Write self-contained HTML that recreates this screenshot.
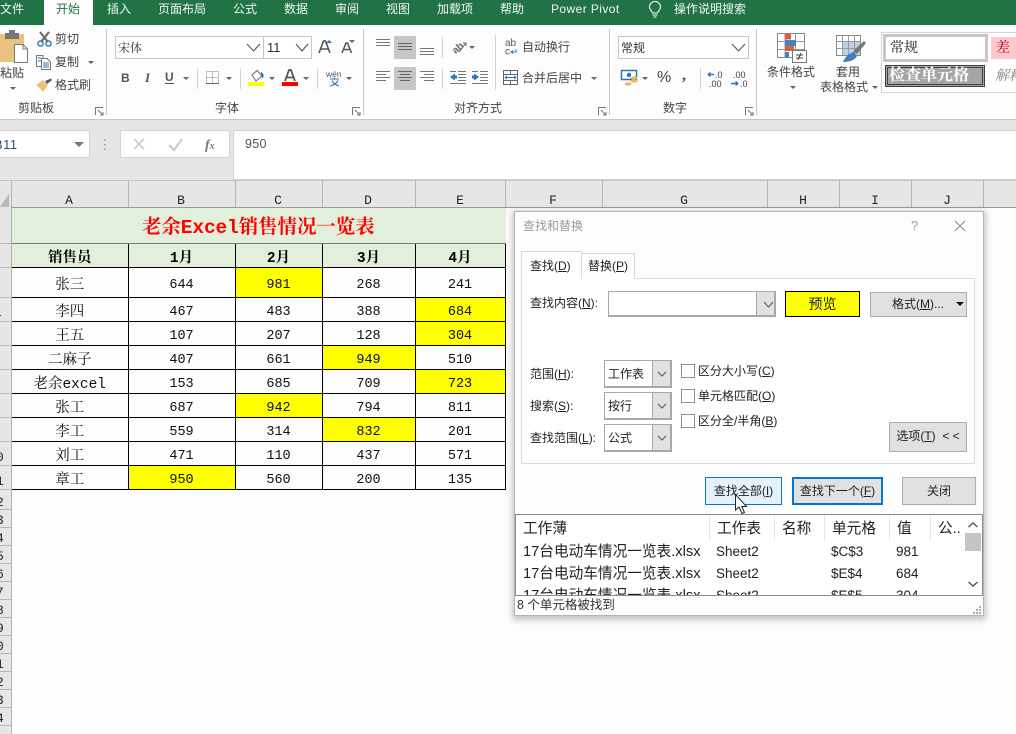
<!DOCTYPE html>
<html lang="zh"><head><meta charset="utf-8"><title>Excel</title>
<style>
html,body{margin:0;padding:0;width:1016px;height:734px;overflow:hidden;background:#fdfdfd}
#p{position:relative;width:1016px;height:734px;overflow:hidden;font-family:"Liberation Sans","Noto Sans CJK SC",sans-serif;font-size:12px;color:#444}
.a{position:absolute;box-sizing:border-box}
.t{position:absolute;white-space:nowrap;line-height:16px}
.w{color:#f2f7f4}
.h{position:absolute;top:193px;line-height:16px;font-family:"Liberation Mono","Noto Serif CJK SC",monospace;font-size:13px;color:#222;transform:translateX(-50%)}
.v{position:absolute;top:180px;width:1px;height:27px;background:#b5b5b5}
.rl{position:absolute;left:0;width:12px;height:1px;background:#b5b5b5}
.rn{position:absolute;left:-4px;margin-top:1px;font-family:"Liberation Mono",monospace;font-size:13px;line-height:16px;color:#222}
table{position:absolute;left:12px;top:208px;border-collapse:collapse;table-layout:fixed;width:493px;font-family:"Liberation Mono","Noto Serif CJK SC",monospace;font-size:13.5px;color:#111}
td{border:1px solid #000;padding:7px 0 0;text-align:center;line-height:14px;overflow:hidden;white-space:nowrap;box-sizing:border-box}
td:first-child{font-size:14.5px;padding-top:8px;border-left:0}
tr.n td{height:24px}
.y{background:#ff0}
.g{background:#e2efda;font-weight:bold;color:#000;font-size:14.5px}
.d{color:#222}
.btn{position:absolute;box-sizing:border-box;background:#e1e1e1;border:1px solid #adadad;text-align:center;color:#222;white-space:nowrap}
.cb{position:absolute;box-sizing:border-box;background:#fff;border:1px solid #8f8f8f;width:14px;height:14px}
.cmb{position:absolute;box-sizing:border-box;background:#fff;border:1px solid #a8a8a8;border-width:1px 2px 2px 1px;color:#222}
.ar{position:absolute;top:0;bottom:0;right:0;width:17px;background:#e1e1e1;border-left:1px solid #a8a8a8}
.lst{position:absolute;font-size:14.67px;color:#222;white-space:nowrap;line-height:18px}
.s{font-size:13.5px}
u{text-decoration:underline}
</style></head><body><div id="p">

<!-- title tabs -->
<div class="a" style="left:0;top:0;width:1016px;height:25px;background:#217346"></div>
<div class="a" style="left:44px;top:0;width:49px;height:26px;background:#fdfdfd"></div>
<div class="t w" style="left:0;top:1px">文件</div>
<div class="t" style="left:56px;top:1px;color:#217346">开始</div>
<div class="t w" style="left:107px;top:1px">插入</div>
<div class="t w" style="left:158px;top:1px">页面布局</div>
<div class="t w" style="left:233px;top:1px">公式</div>
<div class="t w" style="left:284px;top:1px">数据</div>
<div class="t w" style="left:335px;top:1px">审阅</div>
<div class="t w" style="left:386px;top:1px">视图</div>
<div class="t w" style="left:437px;top:1px">加载项</div>
<div class="t w" style="left:500px;top:1px">帮助</div>
<div class="t w" style="left:551px;top:1px;letter-spacing:.42px">Power Pivot</div>
<div class="t w" style="left:674px;top:1px">操作说明搜索</div>

<!-- ribbon bg / formula band -->
<div class="a" style="left:0;top:119px;width:1016px;height:61px;background:#e6e6e6;border-top:1px solid #c6c6c6"></div>

<!-- ribbon text -->
<div class="t" style="left:0;top:65px">粘贴</div>
<div class="t" style="left:55px;top:31px">剪切</div>
<div class="t" style="left:55px;top:54px">复制</div>
<div class="t" style="left:55px;top:77px">格式刷</div>
<div class="t" style="left:18px;top:100px">剪贴板</div>

<div class="a" style="left:115px;top:36px;width:149px;height:23px;border:1px solid #c6c6c6;background:#fff"></div>
<div class="a" style="left:263px;top:36px;width:49px;height:23px;border:1px solid #c6c6c6;background:#fff"></div>
<div class="t" style="left:118px;top:40px;font-family:'Liberation Serif','Noto Serif CJK SC',serif;color:#333">宋体</div>
<div class="t" style="left:267px;top:40px;font-size:13px;color:#333">11</div>
<div class="t" style="left:215px;top:100px">字体</div>

<div class="a" style="left:394px;top:36px;width:22px;height:23px;background:#c6c6c6"></div>
<div class="a" style="left:394px;top:67px;width:22px;height:23px;background:#c6c6c6"></div>
<div class="t" style="left:522px;top:39px">自动换行</div>
<div class="t" style="left:522px;top:70px">合并后居中</div>
<div class="t" style="left:454px;top:100px">对齐方式</div>

<div class="a" style="left:618px;top:36px;width:131px;height:23px;border:1px solid #c6c6c6;background:#fff"></div>
<div class="t" style="left:621px;top:40px;color:#333">常规</div>
<div class="t" style="left:657px;top:70px;font-size:16px">%</div>
<div class="t" style="left:682px;top:68px;font-size:16px;font-weight:bold;font-family:'Liberation Serif',serif">,</div>
<div class="t" style="left:663px;top:100px">数字</div>

<div class="t" style="left:767px;top:64px">条件格式</div>
<div class="t" style="left:836px;top:64px">套用</div>
<div class="t" style="left:820px;top:79px">表格格式</div>

<div class="a" style="left:881px;top:32px;width:140px;height:61px;border:1px solid #d4d4d4;background:#fff"></div>
<div class="a" style="left:883px;top:34px;width:105px;height:28px;border:3px solid #c6c6c6;background:#fff"></div>
<div class="t" style="left:890px;top:41px;font-size:14px;color:#111;font-family:'Liberation Serif','Noto Serif CJK SC',serif">常规</div>
<div class="a" style="left:991px;top:37px;width:25px;height:22px;background:#ffc7ce"></div>
<div class="t" style="left:996px;top:41px;font-size:14px;color:#9c0006;font-family:'Liberation Serif','Noto Serif CJK SC',serif">差</div>
<div class="a" style="left:885px;top:65px;width:100px;height:22px;background:#a5a5a5;border:3px double #3f3f3f"></div>
<div class="t" style="left:889px;top:68px;font-size:16px;font-weight:bold;color:#fff;font-family:'Liberation Serif','Noto Serif CJK SC',serif">检查单元格</div>
<div class="t" style="left:995px;top:69px;font-size:14px;font-style:italic;color:#7f7f7f;font-family:'Liberation Serif','Noto Serif CJK SC',serif">解释</div>

<!-- ribbon icons -->
<svg class="a" style="left:0;top:0" width="1016" height="120" viewBox="0 0 1016 120" fill="none">
 <!-- group separators -->
 <g fill="#c6c6c6"><rect x="106" y="29" width="1" height="86"/><rect x="363" y="29" width="1" height="86"/><rect x="609" y="29" width="1" height="86"/><rect x="756" y="29" width="1" height="86"/></g>
 <g fill="#d4d4d4"><rect x="197" y="68" width="1" height="21"/><rect x="240" y="68" width="1" height="21"/><rect x="317" y="68" width="1" height="21"/><rect x="442" y="37" width="1" height="21"/><rect x="442" y="68" width="1" height="21"/><rect x="495" y="35" width="1" height="55"/><rect x="700" y="68" width="1" height="21"/></g>
 <!-- paste -->
 <rect x="0" y="34" width="24" height="28" rx="1" fill="#e8c27e"/>
 <rect x="5" y="33" width="14" height="6" fill="#777"/><rect x="9" y="30" width="6" height="4" fill="#777"/>
 <path d="M14.500 44.500H23L27.500 49V62.500H14.500Z" fill="#fff" stroke="#777"/><path d="M23 44.500V49H27.500" stroke="#777"/>
 <!-- scissors -->
 <path d="M40 32L48 42M49 32L41 42" stroke="#666" stroke-width="2"/>
 <circle cx="40.500" cy="43.500" r="2.600" stroke="#2e75b6" stroke-width="1.400"/><circle cx="48.500" cy="43.500" r="2.600" stroke="#2e75b6" stroke-width="1.400"/>
 <!-- copy -->
 <path d="M36.500 55.500H43V66.500H36.500Z" stroke="#777" fill="#fff"/><path d="M41.500 58.500H47L50.500 62V69.500H41.500Z" stroke="#777" fill="#fff"/>
 <path d="M38 58H41M38 61H41M43 63H49M43 65H49M43 67H49" stroke="#2e75b6"/>
 <!-- brush -->
 <path d="M36 85L43 80L48 85L43 92C41 90 39 87 36 85Z" fill="#e8c27e"/><path d="M45 81L51 78.500L52 80L47 84Z" fill="#555"/>
 <!-- launchers -->
 <g stroke="#777"><path d="M95.500 115V107.500H103M98 110L103 115M100 115H103V112"/></g>
 <g stroke="#777"><path d="M352.500 115V107.500H360M355 110L360 115M357 115H360V112"/><path d="M598.500 115V107.500H606M601 110L606 115M603 115H606V112"/><path d="M745.500 115V107.500H753M748 110L753 115M750 115H753V112"/></g>
 <!-- small dropdown triangles -->
 <g fill="#666">
  <path d="M10 87H16L13 90Z"/><path d="M88 61H94L91 64Z"/><path d="M183 77H189L186 80Z"/><path d="M226 77H232L229 80Z"/><path d="M269 77H275L272 80Z"/><path d="M303 77H309L306 80Z"/><path d="M346 77H352L349 80Z"/>
  <path d="M469 46H475L472 49Z"/><path d="M591 77H597L594 80Z"/><path d="M642 77H648L645 80Z"/><path d="M790 86H796L793 89Z"/><path d="M872 86H878L875 89Z"/>
 </g>
 <!-- chevrons -->
 <g stroke="#555" stroke-width="1.100"><path d="M247 44L253.500 51L260 44"/><path d="M296 44L302 51L308 44"/><path d="M732 44L738.500 51L745 44"/></g>
 <!-- font grow / shrink -->
 <path d="M319 53L323.500 41H325.500L330 53M320.500 49H328.500" stroke="#555" stroke-width="1.600"/><path d="M326 43L329 40L332 43Z" fill="#2e75b6"/>
 <path d="M342 53L346 43H347.500L351.500 53M343.500 49.500H350" stroke="#555" stroke-width="1.500"/><path d="M349 40H355L352 43Z" fill="#2e75b6"/>
 <!-- B I U -->
 <text x="121" y="82" font-family="Liberation Sans" font-size="12" font-weight="bold" fill="#555">B</text>
 <text x="145" y="82" font-family="Liberation Serif" font-size="13" font-style="italic" font-weight="bold" fill="#555">I</text>
 <text x="165" y="81" font-family="Liberation Sans" font-size="12" font-weight="bold" fill="#555">U</text>
 <rect x="165" y="83" width="9" height="1" fill="#555"/>
 <!-- borders -->
 <path d="M206.500 71.500H218.500V83.500H206.500ZM212.500 71.500V83.500M206.500 77.500H218.500" stroke="#888" stroke-dasharray="1 1"/><rect x="206" y="83" width="13" height="1" fill="#666"/>
 <!-- fill color -->
 <path d="M252 75L257 70.500L262 76L256 81Z" fill="#fff" stroke="#666"/><path d="M261 72C264 73 264 77 263 78C261 77 261 75 261 72Z" fill="#2e75b6"/><rect x="248" y="82" width="16" height="4" fill="#ff0"/>
 <!-- font color -->
 <path d="M285 81L289 70H291L295 81M286.500 77.500H293.500" stroke="#555" stroke-width="1.800"/><rect x="282" y="82" width="16" height="4" fill="#f00"/>
 <!-- wen -->
 <text x="326" y="77" font-family="Liberation Sans" font-size="8.500" fill="#555">wén</text>
 <path d="M330 79H339M334.500 77.500V79M332 80.500C333 83 336 85 339 86M338 80.500C337 83 334 85 330 86" stroke="#2e75b6" stroke-width="1.100"/>
 <!-- alignment rows -->
 <g stroke="#777">
  <path d="M376 39.500H390M376 42.500H390M376 45.500H390"/>
  <path d="M398 43.500H412M398 46.500H412M398 49.500H412" stroke="#666"/>
  <path d="M420 48.500H434M420 51.500H434M420 54.500H434"/>
  <path d="M376 71.500H390M376 74.500H386M376 77.500H390M376 80.500H386" />
  <path d="M398 71.500H412M400 74.500H410M398 77.500H412M400 80.500H410" stroke="#666"/>
  <path d="M420 71.500H434M424 74.500H434M420 77.500H434M424 80.500H434"/>
  <path d="M458 71.500H466M458 74.500H466M458 77.500H466M458 80.500H466M450 83.500H466M450 71.500H456"/>
  <path d="M480 71.500H488M480 74.500H488M480 77.500H488M480 80.500H488M472 83.500H488M472 71.500H478"/>
 </g>
 <path d="M450 77L455 73.500V75.500H457V78.500H455V80.500Z" fill="#2e75b6"/><path d="M479 77L474 73.500V75.500H472V78.500H474V80.500Z" fill="#2e75b6"/>
 <!-- orientation -->
 <text x="452" y="51" font-family="Liberation Sans" font-size="10" font-weight="bold" fill="#666" transform="rotate(-40 458 48)">ab</text>
 <path d="M459 52L466 43M463 43H466V46" stroke="#666"/>
 <!-- wrap text -->
 <text x="505" y="46" font-family="Liberation Sans" font-size="10" fill="#555">ab</text><text x="505" y="54.500" font-family="Liberation Sans" font-size="10" fill="#555">c</text>
 <path d="M516 49V52H511M513 50.500L511 52L513 53.500" stroke="#2e75b6"/>
 <!-- merge -->
 <path d="M503.500 70.500H517.500V84.500H503.500ZM503.500 74.500H517.500M503.500 80.500H517.500M510.500 70.500V74.500M510.500 80.500V84.500" stroke="#666"/><path d="M505 77.500H516M505 77.500L507 76M505 77.500L507 79M516 77.500L514 76M516 77.500L514 79" stroke="#2e75b6"/>
 <!-- currency -->
 <rect x="621.500" y="70.500" width="15" height="9" stroke="#2e75b6" stroke-width="1.500" fill="#fff"/><circle cx="629" cy="75" r="2.200" fill="#2e75b6"/>
 <ellipse cx="634" cy="78" rx="3.500" ry="1.600" fill="#e8b860"/><ellipse cx="634" cy="81" rx="3.500" ry="1.600" fill="#e8b860"/><ellipse cx="628" cy="84" rx="3.500" ry="1.600" fill="#e8b860"/>
 <!-- decimals -->
 <path d="M708 74.500H714M708 74.500L710.500 72.500M708 74.500L710.500 76.500" stroke="#2e75b6" stroke-width="1.400"/>
 <text x="715" y="78" font-family="Liberation Sans" font-size="9" fill="#444">.0</text><text x="709" y="87" font-family="Liberation Sans" font-size="9" fill="#444">.00</text>
 <text x="733" y="78" font-family="Liberation Sans" font-size="9" fill="#444">.00</text><text x="740" y="87" font-family="Liberation Sans" font-size="9" fill="#444">.0</text>
 <path d="M731 83.500H738M738 83.500L735.500 81.500M738 83.500L735.500 85.500" stroke="#2e75b6" stroke-width="1.400"/>
 <!-- conditional format -->
 <rect x="777.500" y="33.500" width="27" height="24" fill="#fff" stroke="#888"/>
 <path d="M777.500 41.500H804.500M777.500 49.500H804.500M785 33.500V57.500M795.500 33.500V57.500" stroke="#999"/>
 <rect x="785" y="34" width="6" height="5.500" fill="#d9603b"/><rect x="785" y="40" width="11" height="6" fill="#4a81bd"/><rect x="785" y="46" width="9" height="5" fill="#d9603b"/><rect x="785" y="52" width="4" height="5.500" fill="#4a81bd"/>
 <rect x="792.500" y="50.500" width="14" height="12" fill="#fff" stroke="#777"/><path d="M796 55H803M796 58H803M801 53L798 60" stroke="#444"/>
 <!-- table format -->
 <rect x="836.500" y="35.500" width="24" height="20" fill="#fff" stroke="#888"/>
 <rect x="842" y="41" width="18" height="14" fill="#bdd0e6"/>
 <path d="M836.500 41.500H860.500M836.500 48.500H860.500M842.500 35.500V55.500M848.500 35.500V55.500M854.500 35.500V55.500" stroke="#999"/>
 <path d="M853 51L864 41L866 43L857 54Z" fill="#777"/><path d="M843 62C845 57 849 53 854 52L857 56C855 60 850 62 843 62Z" fill="#3f7fbd"/>
</svg>

<!-- lightbulb -->
<svg class="a" style="left:647px;top:1px" width="16" height="18" viewBox="0 0 16 18" fill="none" stroke="#f2f7f4" stroke-width="1.100"><path d="M5.500 12C5 10 2.500 8.500 2.500 6A5.500 5.500 0 0 1 13.500 6C13.500 8.500 11 10 10.500 12ZM5.500 14H10.500M6.500 16H9.500"/></svg>

<!-- formula bar -->
<div class="a" style="left:-2px;top:130px;width:92px;height:28px;background:#fff;border:1px solid #d4d4d4"></div>
<div class="t" style="left:-6px;top:137px;font-size:13px;color:#2f4a66;letter-spacing:.5px">B11</div>
<div class="a" style="left:120px;top:130px;width:110px;height:28px;background:#fff;border:1px solid #d4d4d4"></div>
<div class="a" style="left:233px;top:130px;width:783px;height:50px;background:#fff;border:1px solid #d4d4d4;border-right:0"></div>
<div class="t" style="left:245px;top:136px;font-size:12.500px;color:#555;letter-spacing:.3px">950</div>
<svg class="a" style="left:0;top:130px" width="232" height="30" fill="none">
 <path d="M74 12H84L79 17Z" fill="#777"/>
 <path d="M105 9.500v1.500M105 14v1.500M105 18.500V20" stroke="#aaa" stroke-width="2"/>
 <path d="M134 9L144 19M144 9L134 19" stroke="#ccc" stroke-width="1.800"/>
 <path d="M169 15L174 20L182 9" stroke="#ccc" stroke-width="2.200"/>
 <text x="205" y="19" font-family="Liberation Serif" font-size="14" font-style="italic" font-weight="bold" fill="#777">f<tspan font-size="10">x</tspan></text>
</svg>

<!-- headers -->
<div class="a" style="left:0;top:180px;width:1016px;height:1px;background:#c6c6c6"></div>
<div class="a" style="left:0;top:181px;width:1016px;height:27px;background:#e6e6e6;border-bottom:1px solid #9a9a9a"></div>
<div class="a" style="left:0;top:181px;width:12px;height:553px;background:#e6e6e6;border-right:1px solid #b0b0b0"></div>
<svg class="a" style="left:0;top:192px" width="11" height="16"><path d="M9 2V15H0Z" fill="#b8b8b8"/></svg>
<div class="v" style="left:11px"></div><div class="v" style="left:128px"></div><div class="v" style="left:235px"></div><div class="v" style="left:322px"></div><div class="v" style="left:415px"></div><div class="v" style="left:505px"></div><div class="v" style="left:602px"></div><div class="v" style="left:767px"></div><div class="v" style="left:839px"></div><div class="v" style="left:911px"></div><div class="v" style="left:983px"></div>
<div class="h" style="left:69px">A</div><div class="h" style="left:181px">B</div><div class="h" style="left:278px">C</div><div class="h" style="left:368px">D</div><div class="h" style="left:460px">E</div><div class="h" style="left:553px">F</div><div class="h" style="left:684px">G</div><div class="h" style="left:803px">H</div><div class="h" style="left:875px">I</div><div class="h" style="left:947px">J</div>

<!-- row header lines -->
<div class="rl" style="top:243px"></div><div class="rl" style="top:267px"></div><div class="rl" style="top:297px"></div><div class="rl" style="top:321px"></div><div class="rl" style="top:345px"></div><div class="rl" style="top:369px"></div><div class="rl" style="top:393px"></div><div class="rl" style="top:417px"></div><div class="rl" style="top:441px"></div><div class="rl" style="top:465px"></div><div class="rl" style="top:489px"></div><div class="rl" style="top:509px"></div><div class="rl" style="top:527px"></div><div class="rl" style="top:545px"></div><div class="rl" style="top:563px"></div><div class="rl" style="top:581px"></div><div class="rl" style="top:599px"></div><div class="rl" style="top:617px"></div><div class="rl" style="top:635px"></div><div class="rl" style="top:653px"></div><div class="rl" style="top:671px"></div><div class="rl" style="top:689px"></div><div class="rl" style="top:707px"></div><div class="rl" style="top:725px"></div>
<div class="a" style="left:0;top:315px;width:1px;height:1px;background:#333"></div>
<div class="rn" style="top:449px">0</div><div class="rn" style="top:473px">1</div><div class="rn" style="top:494px">2</div><div class="rn" style="top:512px">3</div><div class="rn" style="top:530px">4</div><div class="rn" style="top:548px">5</div><div class="rn" style="top:566px">6</div><div class="rn" style="top:584px">7</div><div class="rn" style="top:602px">8</div><div class="rn" style="top:620px">9</div><div class="rn" style="top:638px">0</div><div class="rn" style="top:656px">1</div><div class="rn" style="top:674px">2</div><div class="rn" style="top:692px">3</div><div class="rn" style="top:710px">4</div>

<!-- sheet table -->
<table><colgroup><col style="width:116px"><col style="width:107px"><col style="width:87px"><col style="width:93px"><col style="width:90px"></colgroup>
<tr style="height:35px"><td colspan="5" style="background:#e2efda;color:#f00;font-weight:bold;font-size:19.500px;border-top:0;padding:6px 0 0;line-height:20px;font-family:'Liberation Mono','Noto Serif CJK SC',monospace;letter-spacing:-.1px;border-color:#777 #e2efda #777 #e2efda">老余Excel销售情况一览表</td></tr>
<tr class="n"><td class="g">销售员</td><td class="g">1月</td><td class="g">2月</td><td class="g">3月</td><td class="g">4月</td></tr>
<tr style="height:30px"><td>张三</td><td>644</td><td class="y">981</td><td>268</td><td>241</td></tr>
<tr class="n"><td>李四</td><td>467</td><td>483</td><td>388</td><td class="y">684</td></tr>
<tr class="n"><td>王五</td><td>107</td><td>207</td><td>128</td><td class="y">304</td></tr>
<tr class="n"><td>二麻子</td><td>407</td><td>661</td><td class="y">949</td><td>510</td></tr>
<tr class="n"><td>老余excel</td><td>153</td><td>685</td><td>709</td><td class="y">723</td></tr>
<tr class="n"><td>张工</td><td>687</td><td class="y">942</td><td>794</td><td>811</td></tr>
<tr class="n"><td>李工</td><td>559</td><td>314</td><td class="y">832</td><td>201</td></tr>
<tr class="n"><td>刘工</td><td>471</td><td>110</td><td>437</td><td>571</td></tr>
<tr class="n"><td>章工</td><td class="y">950</td><td>560</td><td>200</td><td>135</td></tr>
</table>

<!-- dialog -->
<div class="a" style="left:514px;top:211px;width:470px;height:405px;background:#fdfdfd;border:1px solid #b4b4b4;box-shadow:0 2px 6px 2px rgba(0,0,0,.22)"></div>
<div class="t" style="left:523px;top:218px;color:#9a9a9a">查找和替换</div>
<div class="t" style="left:911px;top:218px;color:#9a9a9a;font-size:13px">?</div>
<svg class="a" style="left:954px;top:220px" width="12" height="12"><path d="M1 1L11 11M11 1L1 11" stroke="#888" stroke-width="1"/></svg>

<div class="a" style="left:521px;top:278px;width:454px;height:186px;border:1px solid #d9d9d9;background:#fff"></div>
<div class="a" style="left:581px;top:253px;width:54px;height:26px;border:1px solid #d9d9d9;border-bottom:0;background:#fdfdfd"></div>
<div class="a" style="left:521px;top:251px;width:61px;height:28px;border:1px solid #d9d9d9;border-bottom:0;background:#fff"></div>
<div class="t" style="left:530px;top:258px;color:#222">查找(<u>D</u>)</div>
<div class="t" style="left:588px;top:258px;color:#222">替换(<u>P</u>)</div>

<div class="t" style="left:530px;top:295px;color:#222">查找内容(<u>N</u>):</div>
<div class="cmb" style="left:608px;top:291px;width:168px;height:26px"><div class="ar"></div></div>
<div class="a" style="left:785px;top:291px;width:75px;height:26px;background:#ff0;border:1px solid #000;text-align:center;font-size:14px;line-height:24px;color:#222">预览</div>
<div class="btn" style="left:870px;top:292px;width:97px;height:25px;line-height:23px;text-align:left;padding-left:21px">格式(<u>M</u>)...</div>
<svg class="a" style="left:956px;top:302px" width="8" height="5"><path d="M0 0H8L4 4Z" fill="#111"/></svg>

<div class="t" style="left:530px;top:366px;color:#222">范围(<u>H</u>):</div>
<div class="t" style="left:530px;top:398px;color:#222">搜索(<u>S</u>):</div>
<div class="t" style="left:530px;top:430px;color:#222">查找范围(<u>L</u>):</div>
<div class="cmb" style="left:604px;top:360px;width:68px;height:28px"><div class="ar"></div></div>
<div class="cmb" style="left:604px;top:392px;width:68px;height:28px"><div class="ar"></div></div>
<div class="cmb" style="left:604px;top:424px;width:68px;height:28px"><div class="ar"></div></div>
<div class="t" style="left:608px;top:366px;color:#222">工作表</div>
<div class="t" style="left:608px;top:398px;color:#222">按行</div>
<div class="t" style="left:608px;top:430px;color:#222">公式</div>
<svg class="a" style="left:600px;top:290px" width="180" height="170" fill="none" stroke="#555"><path d="M164 12L168.500 17L173 12"/><path d="M58 82L62 86L66 82"/><path d="M58 114L62 118L66 114"/><path d="M58 146L62 150L66 146"/></svg>

<div class="cb" style="left:681px;top:364px"></div><div class="cb" style="left:681px;top:389px"></div><div class="cb" style="left:681px;top:414px"></div>
<div class="t" style="left:698px;top:363px;color:#222">区分大小写(<u>C</u>)</div>
<div class="t" style="left:698px;top:388px;color:#222">单元格匹配(<u>O</u>)</div>
<div class="t" style="left:698px;top:413px;color:#222">区分全/半角(<u>B</u>)</div>
<div class="btn" style="left:889px;top:422px;width:78px;height:30px;line-height:27px">选项(<u>T</u>)&nbsp; &lt; &lt;</div>

<div class="btn" style="left:705px;top:477px;width:77px;height:28px;line-height:26px;background:#e5f1fb;border-color:#0078d7">查找全部(<u>I</u>)</div>
<div class="btn" style="left:792px;top:477px;width:91px;height:28px;line-height:24px;border:2px solid #0078d7">查找下一个(<u>F</u>)</div>
<div class="btn" style="left:902px;top:477px;width:74px;height:28px;line-height:26px">关闭</div>

<!-- result list -->
<div class="a" style="left:515px;top:514px;width:468px;height:82px;background:#fff;border:1px solid #8a8a8a;overflow:hidden">
 <div class="lst" style="left:7px;top:5px">工作薄</div>
 <div class="lst" style="left:201px;top:5px">工作表</div>
 <div class="lst" style="left:266px;top:5px">名称</div>
 <div class="lst" style="left:316px;top:5px">单元格</div>
 <div class="lst" style="left:381px;top:5px">值</div>
 <div class="lst" style="left:422px;top:5px">公..</div>
 <div class="a" style="left:193px;top:1px;width:1px;height:24px;background:#e4e4e4"></div>
 <div class="a" style="left:258px;top:1px;width:1px;height:24px;background:#e4e4e4"></div>
 <div class="a" style="left:308px;top:1px;width:1px;height:24px;background:#e4e4e4"></div>
 <div class="a" style="left:373px;top:1px;width:1px;height:24px;background:#e4e4e4"></div>
 <div class="a" style="left:414px;top:1px;width:1px;height:24px;background:#e4e4e4"></div>
 <div class="lst" style="left:7px;top:28px">17台电动车情况一览表.xlsx</div><div class="lst s" style="left:200px;top:28px">Sheet2</div><div class="lst s" style="left:315px;top:28px">$C$3</div><div class="lst s" style="left:380px;top:28px">981</div>
 <div class="lst" style="left:7px;top:50px">17台电动车情况一览表.xlsx</div><div class="lst s" style="left:200px;top:50px">Sheet2</div><div class="lst s" style="left:315px;top:50px">$E$4</div><div class="lst s" style="left:380px;top:50px">684</div>
 <div class="a" style="left:0;top:72px;width:447px;height:8px;overflow:hidden">
  <div class="lst" style="left:7px;top:0">17台电动车情况一览表.xlsx</div><div class="lst s" style="left:200px;top:0">Sheet2</div><div class="lst s" style="left:315px;top:0">$E$5</div><div class="lst s" style="left:380px;top:0">304</div>
 </div>
 <div class="a" style="left:448px;top:0;width:18px;height:80px;background:#fff"></div>
 <div class="a" style="left:449px;top:18px;width:16px;height:18px;background:#c4c4c4"></div>
 <svg class="a" style="left:449px;top:0" width="16" height="80" fill="none" stroke="#555" stroke-width="1.500"><path d="M3.500 12L8 8L12.500 12"/><path d="M3.500 67L8 71L12.500 67"/></svg>
</div>
<div class="t" style="left:517px;top:597px;color:#333;font-size:12.500px">8 个单元格被找到</div>
<svg class="a" style="left:972px;top:605px" width="10" height="10" fill="#aaa"><rect x="7" y="1" width="2" height="2"/><rect x="4" y="4" width="2" height="2"/><rect x="7" y="4" width="2" height="2"/><rect x="1" y="7" width="2" height="2"/><rect x="4" y="7" width="2" height="2"/><rect x="7" y="7" width="2" height="2"/></svg>

<!-- cursor -->
<svg class="a" style="left:734px;top:493px" width="16" height="23"><path d="M1.500 1.500V17L5 14L8 20.500L10.500 19.500L7.800 13.500H12.500Z" fill="#fff" stroke="#222" stroke-width="1"/></svg>
</div></body></html>
